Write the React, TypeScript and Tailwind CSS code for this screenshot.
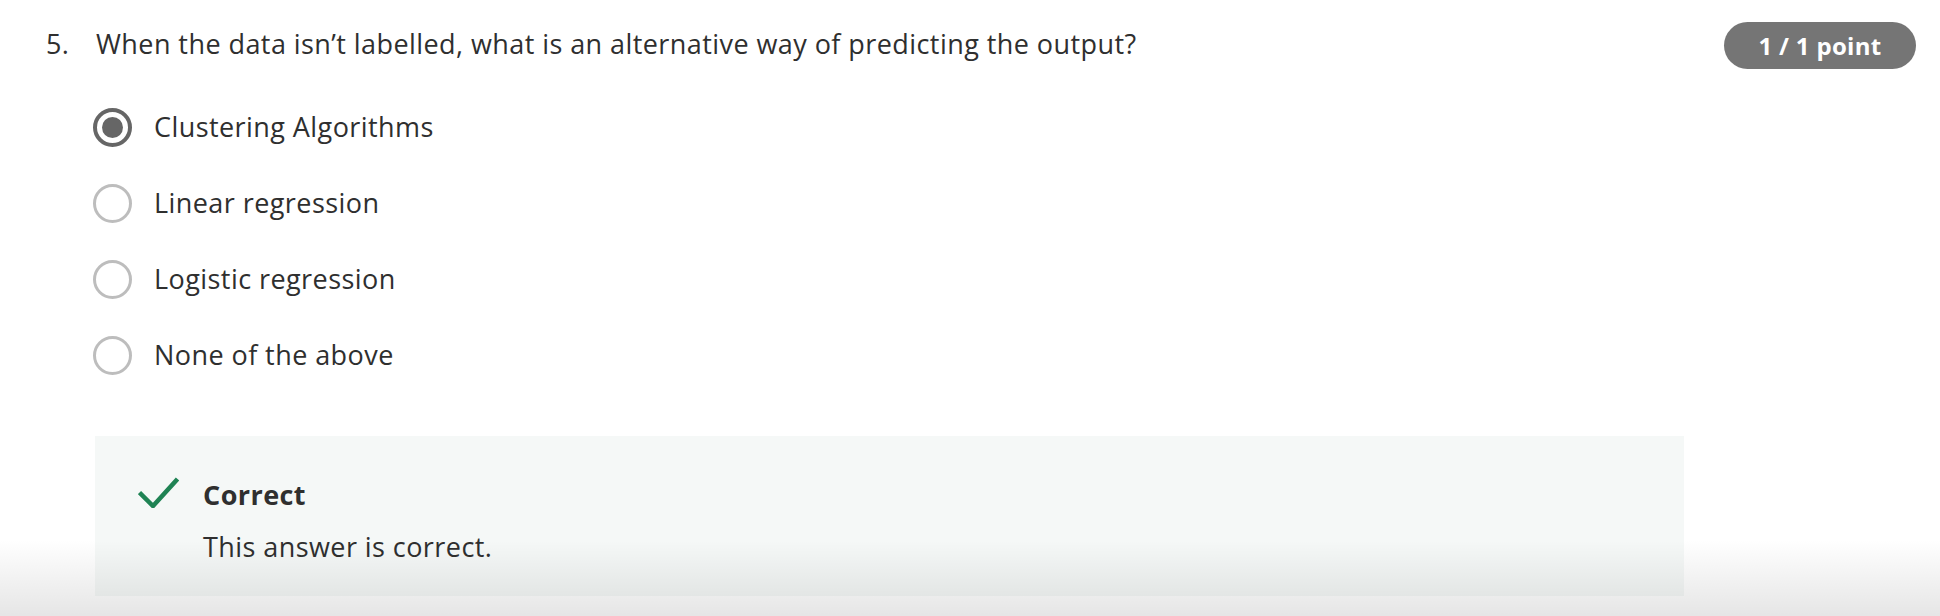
import { Fragment } from 'react';

const options = [
  { label: 'Clustering Algorithms', selected: true },
  { label: 'Linear regression', selected: false },
  { label: 'Logistic regression', selected: false },
  { label: 'None of the above', selected: false },
];

function Radio({ selected }: { selected: boolean }) {
  if (selected) {
    return (
      <span className="flex h-[39px] w-[39px] shrink-0 items-center justify-center rounded-full border-[4px] border-[#666666]">
        <span className="h-[21px] w-[21px] rounded-full bg-[#666666]" />
      </span>
    );
  }
  return <span className="h-[39px] w-[39px] shrink-0 rounded-full border-[3.5px] border-[#bdbdbd]" />;
}

export default function App() {
  return (
    <div className="relative h-[616px] w-full overflow-hidden bg-white font-['Open_Sans',sans-serif] tracking-[0.43px] text-[#2f2f2f]">
      {/* Question header */}
      <div className="flex items-start justify-between pl-[46px] pr-[24px]">
        <div className="flex pt-[26px] text-[27px] leading-[36px]">
          <span className="w-[50px] shrink-0">5.</span>
          <span>When the data isn’t labelled, what is an alternative way of predicting the output?</span>
        </div>
        <div className="mt-[22px] flex h-[47px] w-[192px] items-center justify-center rounded-full bg-[#757575] text-[24px] font-bold tracking-[0.3px] text-white">
          1 / 1 point
        </div>
      </div>

      {/* Options */}
      <div className="mt-[20px] flex flex-col pl-[93px]">
        {options.map((opt) => (
          <Fragment key={opt.label}>
            <div className="flex h-[76px] items-center gap-[22px]">
              <Radio selected={opt.selected} />
              <span className="text-[27px] leading-[36px]">{opt.label}</span>
            </div>
          </Fragment>
        ))}
      </div>

      {/* Feedback */}
      <div className="ml-[95px] mt-[43px] flex h-[160px] w-[1589px] gap-[24px] bg-[#f5f8f7] pl-[43px] pt-[41px]">
        <svg width="41" height="31" viewBox="0 0 41 31" className="shrink-0">
          <path d="M1.5 15.5 L15 29 L39.5 2" fill="none" stroke="#1f8354" strokeWidth="4.5" />
        </svg>
        <div className="text-[27px] leading-[36px]">
          <div className="mb-[16px] font-bold">Correct</div>
          <div>This answer is correct.</div>
        </div>
      </div>

      {/* bottom fade */}
      <div className="pointer-events-none absolute inset-x-0 bottom-0 h-[76px] bg-linear-to-b from-black/0 to-black/[0.1]" />
    </div>
  );
}
